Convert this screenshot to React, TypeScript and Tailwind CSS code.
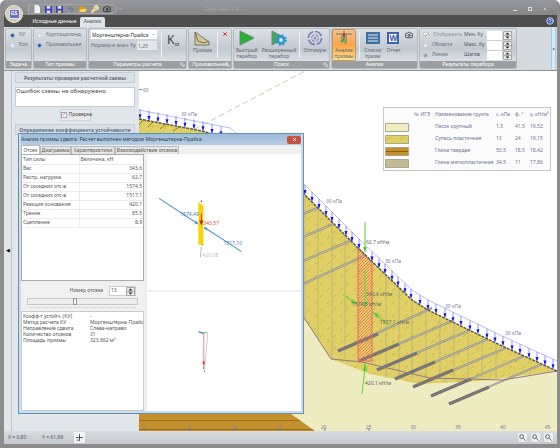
import type { ReactNode } from "react";
import { Camera, ChevronDown, HelpCircle, Undo2, Wrench, X } from "lucide-react";

const surface: [number, number][] = [
  [139, 119],
  [202, 131],
  [240, 142],
  [303, 193],
  [358, 248],
  [412, 300],
  [428, 310],
  [500, 345],
  [557, 371],
];

function surfaceY(x: number) {
  for (let i = 1; i < surface.length; i++) {
    const [x0, y0] = surface[i - 1];
    const [x1, y1] = surface[i];
    if (x <= x1) return y0 + ((x - x0) * (y1 - y0)) / (x1 - x0);
  }
  return surface[surface.length - 1][1];
}

const loadXs = [
  140, 149, 158, 167, 176, 185, 194, 203, 212, 221, 305, 312, 319, 326, 332, 339, 346, 352, 359, 372, 379, 385, 392,
  398, 405, 411, 420, 428, 436, 445, 453, 461, 470, 478, 487, 495, 503, 512, 520, 529, 537, 545, 553,
];

const nails = [
  [303, 214, 317, 208],
  [303, 237, 333, 224],
  [303, 261, 352, 240],
  [303, 284, 366, 255],
  [338, 351, 432, 308],
  [359, 361, 452, 321],
  [377, 370, 470, 330],
  [395, 379, 488, 339],
  [413, 387, 506, 348],
  [431, 396, 524, 356],
  [449, 404, 542, 364],
];

const slices = [305, 318, 332, 345, 386, 399, 412, 426, 440, 454, 468, 482, 496];

const soils = [
  { name: "Песок крупный", c: "1,5", phi: "41,5", gamma: "19,52", fill: "url(#sand)" },
  { name: "Супесь пластичная", c: "13", phi: "24", gamma: "19,15", fill: "url(#loam)" },
  { name: "Глина твердая", c: "50,5", phi: "18,5", gamma: "18,42", fill: "#c4902c", line: true },
  { name: "Глина мягкопластичная", c: "34,5", phi: "11", gamma: "17,86", fill: "#c4ba93" },
];

const forces = [
  ["Вес", "343,6"],
  ["Распр. нагрузка", "62,7"],
  ["От соседних отс-в", "1574,5"],
  ["От соседних отс-в", "1517,1"],
  ["Реакция основания", "420,1"],
  ["Трение", "85,5"],
  ["Сцепление", "8,9"],
];

const info = [
  ["Коэфф-т устойч. (КУ)", "-"],
  ["Метод расчета КУ", "Моргенштерна-Прайс"],
  ["Направление сдвига", "Слева-направо"],
  ["Количество отсеков", "31"],
  ["Площадь призмы", "323,862 м²"],
];

function Group({ title, className, children }: { title: string; className: string; children: ReactNode }) {
  return (
    <section
      className={`relative flex shrink-0 flex-col overflow-hidden rounded-xs border border-[#b4b9bf] bg-linear-to-b from-[#dce1e6] via-[#c3c9d1] to-[#e8ecef] ${className}`}
    >
      <div className="flex min-h-0 flex-1">{children}</div>
      <h2 className="h-[7px] shrink-0 bg-[#9c9fa1] text-center leading-[7px] whitespace-nowrap text-white">{title}</h2>
    </section>
  );
}

function Launcher() {
  return (
    <svg viewBox="0 0 6 6" className="absolute right-px bottom-px size-[5px]" fill="none" stroke="#e6e8ea">
      <path d="M1 4V1H4M2.5 2.5 5 5M5 3V5H3" />
    </svg>
  );
}

function Tool({ label, active, children }: { label: string; active?: boolean; children: ReactNode }) {
  return (
    <button
      className={`flex shrink-0 flex-col items-center leading-[6px] text-[#5c6670] ${
        active
          ? "h-8 w-6 rounded-xs border border-[#c09a5c] bg-linear-to-b from-[#f4c089] via-[#fba445] to-[#fde08c]"
          : "px-px pt-px"
      }`}
    >
      <span className="flex h-4 items-center">{children}</span>
      <span className="mt-px whitespace-pre">{label}</span>
    </button>
  );
}

function Radio({ label, name, checked, disabled }: { label: string; name: string; checked?: boolean; disabled?: boolean }) {
  return (
    <label className="flex h-[10px] items-center gap-1 whitespace-nowrap text-[#66717d]">
      <input
        type="radio"
        name={name}
        defaultChecked={checked}
        disabled={disabled}
        className="size-[5px] shrink-0 appearance-none rounded-full border border-[#c5d5e4] bg-[#e9f0f6] checked:border-[#a3c0dc] checked:bg-[#1f5c9c] disabled:border-[#c9c9c9] disabled:checked:bg-[#999]"
      />
      {label}
    </label>
  );
}

function Separator() {
  return <div className="my-[3px] w-px shrink-0 bg-[#eef1f3]" />;
}

function Spinner() {
  return (
    <svg viewBox="0 0 9 9" className="size-[9px] shrink-0">
      <path d="M0.5 0.5H8.5V8.5H0.5Z" fill="#e8e8e8" stroke="#aaa" />
      <path d="M1 4.5H8" stroke="#aaa" />
      <path d="M4.5 1.5 6.5 3.5H2.5ZM4.5 7.5 6.5 5.5H2.5Z" fill="#222" />
    </svg>
  );
}

function KuRow({ label }: { label: string }) {
  return (
    <label className="flex h-[10px] items-center gap-px text-[#4d5661]">
      <span className="w-[22px] whitespace-nowrap">{label}</span>
      <input className="h-[9px] w-[15px] bg-white" />
      <Spinner />
    </label>
  );
}

function Disk({ accent }: { accent: string }) {
  return (
    <svg viewBox="0 0 8 8" className="size-[7px]">
      <path d="M0 0H8V8H0Z" fill="#3b3fc0" />
      <path d="M2 0H6V3H2Z" fill="#dfe3f5" />
      <path d="M2 5H6V8H2Z" fill={accent} />
    </svg>
  );
}

function Ribbon() {
  return (
    <div className="flex h-[43px] shrink-0 gap-px bg-[#d5dade] p-px text-[5px]">
      <Group title="Задача" className="w-[27px]">
        <div className="pt-px pl-1">
          <Radio name="task" label="КУ" checked />
          <Radio name="task" label="Еоп" />
        </div>
      </Group>
      <Group title="Тип призмы" className="w-[54px]">
        <div className="pt-px pl-[3px]">
          <Radio name="prism" label="Круглоцилинд." />
          <Radio name="prism" label="Произвольная" checked />
        </div>
      </Group>
      <Group title="Параметры расчета" className="w-[99px]">
        <div className="w-[68px] shrink-0 pt-px pl-[2px]">
          <div className="relative">
            <select
              aria-label="Метод расчета"
              className="block h-[9px] w-full appearance-none bg-white px-px text-[5px] leading-[8px] text-[#333]"
            >
              <option>Моргенштерна-Прайса</option>
            </select>
            <ChevronDown className="pointer-events-none absolute top-[3px] right-[2px] size-[3px]" strokeWidth={4} />
          </div>
          <label className="mt-[2px] flex items-center justify-between whitespace-nowrap text-[#66717d]">
            Нормир-е знач. Ку
            <input defaultValue="1,25" className="h-[9px] w-5 bg-[#e4e7ea] px-px" />
          </label>
        </div>
        <div className="ml-1 flex gap-[5px]">
          <Separator />
          <span className="pt-1 text-[12px] leading-[14px] text-[#3d444b]">
            K<sub className="text-[6px]">st</sub>
          </span>
        </div>
        <Launcher />
      </Group>
      <Group title="Произвольная" className="w-[44px]">
        <div className="ml-[3px] flex gap-1">
          <Tool label="Призма">
            <svg viewBox="0 0 16 16" className="size-4">
              <path d="M1 2 15 12V15H1Z" fill="#d3ca9b" stroke="#77735f" />
              <path d="M1 2 4 11 10 13 15 11" fill="none" stroke="#806a3e" />
            </svg>
          </Tool>
          <Separator />
          <X className="mt-[2px] size-[6px] text-[#d33]" strokeWidth={4} />
        </div>
        <Launcher />
      </Group>
      <Group title="Поиск" className="w-[97px]">
        <div className="flex w-full justify-between pr-[2px] pl-px">
          <Tool label={"Быстрый\nперебор"}>
            <svg viewBox="0 0 16 16" className="size-4">
              <path d="M1 1 15 8 1 15Z" fill="#25b52f" stroke="#75827d" />
            </svg>
          </Tool>
          <Tool label={"Расширенный\nперебор"}>
            <svg viewBox="0 0 16 16" className="size-4">
              <path d="M1 1 14 8 1 15Z" fill="#40ad56" stroke="#75827d" />
              <circle cx="10" cy="10" r="3.2" fill="#d5ebf5" stroke="#2e96d0" strokeWidth="2.6" />
              <circle cx="10" cy="10" r="5" fill="none" stroke="#2e96d0" strokeWidth="1.6" strokeDasharray="2 1.93" />
            </svg>
          </Tool>
          <Separator />
          <Tool label="Оптимум">
            <svg viewBox="0 0 16 16" className="size-4" fill="none" stroke="#7776ae">
              <circle cx="8" cy="8" r="6.5" strokeWidth="1.5" strokeDasharray="8 2" />
              <circle cx="8" cy="8" r="3.5" strokeDasharray="4 1.5" />
              <circle cx="8" cy="8" r="1" />
            </svg>
          </Tool>
        </div>
        <Launcher />
      </Group>
      <Group title="Анализ" className="w-[87px]">
        <div className="flex w-full items-start gap-[3px]">
          <Tool label={"Анализ\nпризмы"} active>
            <svg viewBox="0 0 16 16" className="size-4">
              <path d="M5 3H11V14H9L5 9Z" fill="#9a9c72" />
              <path d="M0 4H5M11 4H16M8 0V7" stroke="#6c7a70" />
              <path d="M8 3V7" stroke="#e02a1c" strokeWidth="2" />
              <path d="M5 12 8 9" stroke="#2cae38" strokeWidth="2" />
            </svg>
          </Tool>
          <div className="flex self-stretch">
            <Separator />
          </div>
          <Tool label={"Список\nпризм"}>
            <svg viewBox="0 0 14 14" className="size-[14px]">
              <path d="M0 1H14V13H0Z" fill="#3f719f" />
              <path d="M2 4H12M2 7H12M2 10H12" stroke="#dfeaf4" />
            </svg>
          </Tool>
          <Tool label="Отчет">
            <span className="flex size-3 items-center justify-center border-2 border-[#3c64b1] bg-white text-[8px] font-bold text-[#2e58aa]">
              W
            </span>
          </Tool>
          <Camera className="mt-[2px] size-2 shrink-0 text-[#4b5056]" strokeWidth={3} />
        </div>
      </Group>
      <Group title="Результаты перебора" className="w-[98px]">
        <div className="w-11 shrink-0 pt-px pl-[3px] text-[#8a9299]">
          <label className="flex h-[10px] items-center gap-1">
            <span className="relative flex size-[6px]">
              <input type="checkbox" defaultChecked className="size-[6px] appearance-none border border-[#ccc] bg-white" />
              <svg viewBox="0 0 6 6" className="pointer-events-none absolute inset-0" fill="none" stroke="#777">
                <path d="M1.5 3 2.5 4.5 5 1.5" />
              </svg>
            </span>
            Отображать
          </label>
          <Radio name="show" label="Области" disabled />
          <Radio name="show" label="Линии" checked disabled />
        </div>
        <div className="pt-px">
          <KuRow label="Мин. Ку" />
          <KuRow label="Макс. Ку" />
          <KuRow label="Шагов" />
        </div>
      </Group>
      <button aria-label="Развернуть" className="ml-auto w-[5px] border-x border-[#9bd0ee] bg-[#d8eaf6] text-[4px]">
        ▸
      </button>
    </div>
  );
}

function TitleBar() {
  return (
    <header className="relative shrink-0 text-[5px]">
      <div className="flex h-[15px] items-center bg-linear-to-b from-[#9797a0] to-[#878787] pt-[3px] pr-[10px] pl-6">
        <div className="flex h-[10px] items-center gap-1 rounded-r-full border border-[#a6a6a8] bg-[#929294] pr-[5px] pl-1">
          <svg viewBox="0 0 8 8" className="size-2">
            <path d="M1.5 0H5L7 2V8H1.5Z" fill="#eef1f5" />
          </svg>
          <Disk accent="#dfe3f5" />
          <Disk accent="#e7c35c" />
          <Undo2 className="ml-px size-[6px] text-[#56719c]" strokeWidth={4} />
          <svg viewBox="0 0 8 8" className="ml-px size-2">
            <path d="M0 1H3L4 2H7V7H0Z" fill="#d99a1c" />
            <path d="M2 4H8L6 7H0Z" fill="#fbd764" />
          </svg>
          <Wrench className="size-2 text-[#eadba5]" strokeWidth={4} />
          <Camera className="size-2 text-[#30353c]" strokeWidth={3} />
        </div>
        <ChevronDown className="ml-[2px] size-1 shrink-0 text-white" />
        <h1 className="ml-[82px] text-[6px] whitespace-nowrap text-[#a5a5a5]">GeoStab 7.0 -</h1>
        <div className="ml-auto flex gap-[11px] text-[#dcdcdc]">
          <button aria-label="Свернуть" className="h-1 w-1 border-b border-current" />
          <button aria-label="Развернуть окно" className="h-1 w-1 border border-current" />
          <button aria-label="Закрыть">
            <X className="size-1" strokeWidth={4} />
          </button>
        </div>
      </div>
      <nav className="flex h-3 items-end bg-[#4e4e4f] pl-[25px] whitespace-nowrap">
        <button className="h-[10px] w-[51px] shrink-0 text-white">Исходные данные</button>
        <button className="h-[10px] w-[25px] shrink-0 rounded-t-xs bg-[#dfe4e7] text-[#4c545c]">Анализ</button>
        <HelpCircle className="mr-[3px] mb-[2px] ml-auto size-2 fill-[#3e67c3] text-white" />
      </nav>
      <button
        aria-label="Меню"
        className="absolute top-[5px] left-px flex size-[18px] items-center justify-center rounded-full border border-[#f6edcb] bg-[#cfcabc]"
      >
        <span className="flex h-[10px] w-[11px] items-center justify-center border border-[#e1e2f2] bg-[#6973b9] text-[5px] font-bold text-white">
          GS
        </span>
      </button>
    </header>
  );
}

function SidePanel() {
  return (
    <aside className="flex w-[135px] shrink-0 bg-[#e1e6ea]">
      <button aria-label="Скрыть панель" className="w-2 border-r border-[#bcc9d4] text-[5px] text-black">
        ◀
      </button>
      <div className="flex-1 pr-1 pl-[3px] text-[5px]">
        <h2 className="mt-px h-[11px] border border-[#c5ced8] bg-[#d9dfe6] text-center leading-[10px] font-bold whitespace-nowrap text-[#646d77]">
          Результаты проверки расчетной схемы
        </h2>
        <textarea
          readOnly
          aria-label="Результаты проверки"
          defaultValue="Ошибок схемы не обнаружено"
          className="mt-1 block h-5 w-full resize-none border border-[#c4cdd6] bg-white text-[6px] leading-[6px] text-[#444]"
        />
        <button className="mx-auto mt-[2px] flex h-3 w-[31px] items-center gap-[2px] border border-[#ced5dc] bg-[#e7eaed]">
          <span className="flex size-[6px] shrink-0 items-center border border-[#a2a2b8] bg-white text-[#a13e92]">✓</span>
          Проверка
        </button>
        <h2 className="mt-[3px] h-[11px] border border-[#c5ced8] bg-[#d9dfe6] text-center leading-[10px] font-bold whitespace-nowrap text-[#646d77]">
          Определение коэффициента устойчивости
        </h2>
      </div>
    </aside>
  );
}

function Legend() {
  return (
    <div className="absolute top-9 right-[6px] w-[168px] border border-[#c9c9c9] bg-[#fbfbfb] p-px">
      <table className="w-full text-left text-[5px] text-[#6a7494]">
        <thead>
          <tr className="h-3">
            <th className="w-[29px]" />
            <th className="w-[21px] font-normal whitespace-nowrap">№ ИГЭ</th>
            <th className="font-normal">Наименование грунта</th>
            <th className="w-[19px] font-normal">c, кПа</th>
            <th className="w-[15px] font-normal">φ, °</th>
            <th className="w-[19px] font-normal">γ, кН/м³</th>
          </tr>
        </thead>
        <tbody>
          {soils.map((soil) => (
            <tr key={soil.name} className="h-3">
              <td>
                <svg viewBox="0 0 24 9" className="h-[9px] w-6">
                  <path d="M0.5 0.5H23.5V8.5H0.5Z" fill={soil.fill} stroke="#a9a78c" />
                  {soil.line && <path d="M1 4.5H23" stroke="#8d6218" />}
                </svg>
              </td>
              <td />
              <td className="whitespace-nowrap">{soil.name}</td>
              <td>{soil.c}</td>
              <td>{soil.phi}</td>
              <td>{soil.gamma}</td>
            </tr>
          ))}
        </tbody>
      </table>
    </div>
  );
}

function Scene() {
  const top = surface.map((p) => p.join(",")).join(" ");
  return (
    <svg viewBox="139 71 418 360" preserveAspectRatio="xMinYMin slice" className="absolute inset-0 size-full">
      <defs>
        <pattern id="loam" width="13" height="13" patternUnits="userSpaceOnUse">
          <rect width="13" height="13" fill="#dfcf64" />
          <path d="M2 5 5 2M8 12 11 9" stroke="#c8a640" strokeWidth="0.7" />
        </pattern>
        <pattern id="sand" width="8" height="8" patternUnits="userSpaceOnUse">
          <rect width="8" height="8" fill="#f0ecc2" />
          <circle cx="2" cy="2" r="0.4" fill="#ddd5a0" />
          <circle cx="6" cy="6" r="0.4" fill="#ddd5a0" />
        </pattern>
        <pattern id="redHatch" width="3" height="3" patternUnits="userSpaceOnUse">
          <path d="M0 3 3 0" stroke="#f2655a" strokeWidth="0.8" />
        </pattern>
      </defs>
      <polygon points={`${top} 557,431 139,431`} fill="url(#loam)" />
      <polygon points="291,300 303,316 331,359 370,374 420,384 480,381 557,371 557,431 291,431" fill="url(#sand)" />
      <polygon points="139,414 291,414 315,431 139,431" fill="#c4902c" />
      <path d="M139 420.5H300M139 429.5H313" stroke="#9a6e20" />
      <path d="M139 125 144 119M148 127 153 122M160 129 166 124M173 131 179 127" stroke="#9a7b20" />
      <g stroke="#b5ad86" strokeWidth="0.7">
        {slices.map((x) => (
          <path key={x} d={`M${x} ${surfaceY(x)}V${Math.min(x < 362 ? 359 : 378, 318 + (x - 303) * 1.5)}`} />
        ))}
      </g>
      {nails.map(([x0, y0, x1, y1]) => (
        <g key={y0} fill="none">
          <path d={`M${x0} ${y0} ${x1} ${y1}`} stroke="#8d8d88" strokeWidth="2" />
          <path d={`M${x0} ${y0} ${x1} ${y1}`} stroke="#bfbdb0" strokeWidth="1" />
          {x0 > 303 && <path d={`M${x0} ${y0}l40 -17`} stroke="#777779" strokeWidth="3.5" />}
        </g>
      ))}
      <path d="M303 316 331 359 362 362 430 378 503 380 557 371" fill="none" stroke="#907a86" />
      <polygon points="358,248 372,262 372,361 358,361" fill="url(#redHatch)" stroke="#f2655a" />
      <polyline points={top} fill="none" stroke="#5c5a40" strokeWidth="1.5" strokeDasharray="3 1" />
      <g stroke="#4c4cf0" fill="#1515e0" strokeWidth="0.6">
        <path d="M139 110 230 128 236 133M303 183 358 238 412 290 428 300 500 335 557 361" fill="none" stroke="#8e8ef5" />
        {loadXs.map((x) => {
          const y = surfaceY(x);
          return (
            <g key={x}>
              <path d={`M${x} ${y - 10}V${y - 2}`} />
              <path d={`M${x - 1.5} ${y - 5}h3l-1.5 5z`} stroke="none" />
            </g>
          );
        })}
      </g>
      <path d="M195 129 307 70" stroke="#a3bba1" strokeWidth="0.7" strokeDasharray="6 3" />
      <g stroke="#6fd850" fill="#58cc3c" strokeWidth="1.2">
        <path d="M365 222V250M365 270V304M343 295 354 302M389 325 376 315M362 394 365 368" />
        <path d="M363 247h4l-2 6zM363 302h4l-2 6zM352 299l6 5-7-1zM379 314l-7-2 5 6zM363 371l2-9 2 9z" stroke="none" />
      </g>
      <path d="M139 89.5H142M189 428V431M235 428V431M280 428V431M325 428V431M369 428V431" stroke="#7680a0" />
      <g className="text-[5px]" fill="#7680a0">
        <text x="181" y="116">30 кПа</text>
        <text x="326" y="203">30 кПа</text>
        <text x="385" y="263">30 кПа</text>
        <text x="445" y="308">30 кПа</text>
        <text x="505" y="335">30 кПа</text>
        <text x="143" y="92">60</text>
        {[0, 5, 10, 15, 20, 25, 30, 35, 40, 45].map((n) => (
          <text key={n} x={(n < 10 ? 143 : 142) + n * 8.95} y="429">
            {n}
          </text>
        ))}
      </g>
      <g className="text-[5px]" fill="#5c6166">
        <text x="366" y="244">62,7 кН/м</text>
        <text x="366" y="296">343,6 кН/м</text>
        <text x="352" y="306">1574,5 кН/м</text>
        <text x="380" y="324">1517,1 кН/м</text>
        <text x="365" y="385">420,1 кН/м</text>
      </g>
    </svg>
  );
}

function PrismDialog() {
  return (
    <div
      role="dialog"
      aria-label="Анализ призмы сдвига"
      className="absolute top-[133px] left-[18px] flex h-[281px] w-[286px] flex-col border border-[#5f93b4] bg-[#cfdcea] px-[2px] pb-[2px] text-[5px] text-[#555]"
    >
      <div className="flex h-[11px] shrink-0 items-center justify-between bg-linear-to-b from-[#9dbbd9] to-[#b7cde4]">
        <h2 className="whitespace-nowrap text-[#333d49]">
          Анализ призмы сдвига. Расчет выполнен методом Моргенштерна-Прайса
        </h2>
        <button
          aria-label="Закрыть окно"
          className="flex h-2 w-[14px] items-center justify-center rounded-xs bg-[#c75240] text-white"
        >
          <X className="size-[5px]" strokeWidth={4} />
        </button>
      </div>
      <div role="tablist" className="flex h-[9px] shrink-0 items-end bg-[#f0f0f0] leading-[7px] whitespace-nowrap">
        <button role="tab" className="h-[9px] w-[19px] border border-b-0 border-[#bbb] bg-white">
          Отсек
        </button>
        <button role="tab" className="h-2 w-[31px] border border-b-0 border-[#bbb] bg-[#e6e6e6]">
          Диаграмма
        </button>
        <button role="tab" className="h-2 w-11 border border-b-0 border-[#bbb] bg-[#e6e6e6]">
          Характеристики
        </button>
        <button role="tab" className="h-2 w-16 border border-b-0 border-[#bbb] bg-[#e6e6e6]">
          Взаимодействие отсеков
        </button>
      </div>
      <div className="flex min-h-0 flex-1 gap-[3px] bg-[#f0f0f0]">
        <div className="flex w-[123px] shrink-0 flex-col">
          <div className="h-[127px] border border-[#aaa] bg-white">
            <table className="w-full text-left">
              <thead>
                <tr className="h-[9px] border-b border-[#ececec]">
                  <th className="w-[57px] border-r border-[#ececec] px-px font-normal">Тип силы</th>
                  <th className="px-px font-normal">Величина, кН</th>
                </tr>
              </thead>
              <tbody>
                {forces.map(([name, value]) => (
                  <tr key={value} className="h-[9px] border-b border-[#ececec]">
                    <td className="border-r border-[#ececec] px-px">{name}</td>
                    <td className="px-px text-right">{value}</td>
                  </tr>
                ))}
              </tbody>
            </table>
          </div>
          <label className="mt-[5px] mr-2 flex h-[10px] shrink-0 items-center justify-end gap-[6px]">
            Номер отсека
            <span className="flex h-[10px] w-[27px] items-center border border-[#ccc] bg-white">
              <input defaultValue="13" className="w-0 flex-1 px-px" />
              <Spinner />
            </span>
          </label>
          <input
            type="range"
            aria-label="Отсек"
            min={1}
            max={31}
            defaultValue={14}
            className="mx-[6px] mt-[2px] h-[7px] appearance-none border border-[#c9c9c9] bg-[#ececec] [&::-webkit-slider-thumb]:h-[7px] [&::-webkit-slider-thumb]:w-1 [&::-webkit-slider-thumb]:appearance-none [&::-webkit-slider-thumb]:border [&::-webkit-slider-thumb]:border-[#999] [&::-webkit-slider-thumb]:bg-[#f4f4f4]"
          />
          <div className="mx-2 mt-[2px] border-t border-dotted border-[#c9c9c9]" />
          <dl className="mt-[3px] grid flex-1 auto-rows-[6px] grid-cols-[67px_1fr] border border-[#ccc] bg-white px-px pt-px leading-[6px] whitespace-nowrap">
            {info.map(([term, value]) => (
              <div key={term} className="contents">
                <dt>{term}</dt>
                <dd>{value}</dd>
              </div>
            ))}
          </dl>
        </div>
        <div className="flex min-w-0 flex-1 flex-col gap-[2px]">
          <svg viewBox="147 154 153 135" className="h-[136px] w-full bg-white">
            <polygon points="198,202 203,205 203,244 198,244" fill="#fad207" />
            <path d="M159 198 197 223M241 251 204 227" stroke="#4696cf" strokeWidth="1" />
            <path d="M194 223 198 224 196 220ZM207 227 203 227 206 230Z" fill="#4696cf" />
            <path d="M201 213V223" stroke="#e83a20" />
            <path d="M199 220h4l-2 5z" fill="#b12614" />
            <path d="M200 257 201 246" stroke="#b9b9b9" />
            <circle cx="201" cy="201" r="0.8" fill="#555" />
            <circle cx="202" cy="244" r="0.8" fill="#73c72c" />
            <text x="180" y="216" fill="#3c7da8">1574,49</text>
            <text x="203" y="224" fill="#f04444">343,57</text>
            <text x="223" y="244" fill="#3c7da8">1517,10</text>
            <text x="202" y="256" fill="#bdbdbd">420,08</text>
          </svg>
          <svg viewBox="147 291 153 120" className="min-h-0 w-full flex-1 bg-white">
            <path d="M203 332V366" stroke="#f5aaaa" strokeWidth="1.5" />
            <path d="M207 333 204 369" stroke="#cfcfcf" />
            <path d="M198 331 203 333" stroke="#388ed0" strokeWidth="1.5" />
            <path d="M202 332H207" stroke="#6ac251" />
            <path d="M203 361V364" stroke="#e33" strokeWidth="2" />
            <path d="M203 366V369M204 370V372" stroke="#7d78b8" />
          </svg>
        </div>
      </div>
    </div>
  );
}

export default function App() {
  return (
    <div className="relative flex h-screen min-h-[448px] flex-col overflow-hidden rounded-t-md bg-[#8c8c8c] pr-[3px] pl-1 font-['Noto_Sans',sans-serif] text-[#444]">
      <TitleBar />
      <Ribbon />
      <div className="h-px shrink-0 bg-[#909396]" />
      <main className="flex min-h-0 flex-1">
        <SidePanel />
        <div className="relative min-w-0 flex-1 overflow-hidden bg-white">
          <Scene />
          <Legend />
        </div>
      </main>
      <footer className="mb-1 flex h-[13px] shrink-0 items-center bg-linear-to-b from-[#d9dde2] to-[#c5c9ce] pl-1 text-[5px] text-[#4c5560]">
        <span className="w-[34px]">X = 0,80</span>
        <span className="w-8">Y = 61,99</span>
        <button aria-label="Привязка" className="flex h-[11px] w-[11px] items-center justify-center bg-white/70">
          <svg viewBox="0 0 8 8" className="size-[7px]" stroke="#444">
            <path d="M4 0V8M0 4H8M1 7H3" />
          </svg>
        </button>
        <div className="ml-auto flex gap-1 pr-1">
          {["Увеличить", "Уменьшить", "Показать все"].map((name) => (
            <button key={name} aria-label={name} className="flex size-[9px] items-center justify-center rounded-xs bg-white/60">
              <svg viewBox="0 0 8 8" className="size-[7px]" fill="none" stroke="#555">
                <circle cx="3" cy="3" r="2.2" />
                <path d="M5 5 7.5 7.5" />
              </svg>
            </button>
          ))}
        </div>
      </footer>
      <PrismDialog />
    </div>
  );
}
